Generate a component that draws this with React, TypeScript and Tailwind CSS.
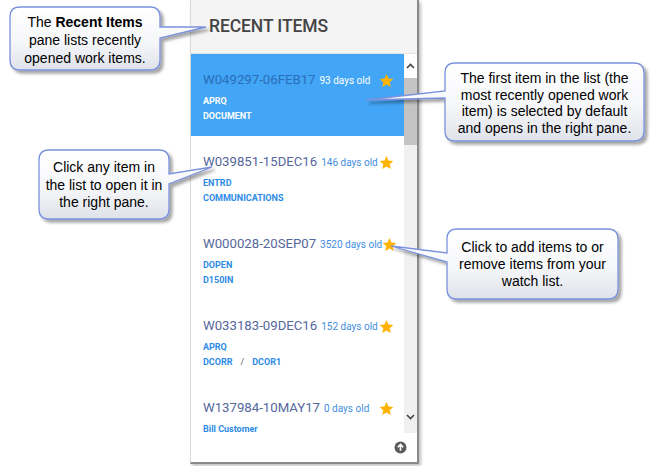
import React from "react";

type Item = {
  id: string;
  age: string;
  lines: React.ReactNode[];
  selected?: boolean;
};

const items: Item[] = [
  { id: "W049297-06FEB17", age: "93 days old", lines: ["APRQ", "DOCUMENT"], selected: true },
  { id: "W039851-15DEC16", age: "146 days old", lines: ["ENTRD", "COMMUNICATIONS"] },
  { id: "W000028-20SEP07", age: "3520 days old", lines: ["DOPEN", "D150IN"] },
  {
    id: "W033183-09DEC16",
    age: "152 days old",
    lines: [
      "APRQ",
      <span key="d">
        DCORR<span className="mx-[8px] text-[#5a5a5a] font-normal">/</span>DCOR1
      </span>,
    ],
  },
  { id: "W137984-10MAY17", age: "0 days old", lines: ["Bill Customer"] },
];

function Star() {
  return (
    <svg width="15" height="15" viewBox="0 0 24 24" className="shrink-0">
      <path
        d="M12 1.5l3.2 7.1 7.7.8-5.8 5.2 1.7 7.6L12 18.3l-6.8 3.9 1.7-7.6L1.1 9.4l7.7-.8z"
        fill="#ffb300"
      />
    </svg>
  );
}

function Row({ item, last }: { item: Item; last?: boolean }) {
  const sel = item.selected;
  return (
    <div
      className={`${last ? "" : "h-[82px]"} shrink-0 pt-[18px] pl-[12px] pr-[10px] ${sel ? "bg-[#42a5f5]" : "bg-white"}`}
    >
      <div className="flex items-center justify-between h-[16px]">
        <div className="flex items-baseline whitespace-nowrap">
          <span
            className={`text-[13.2px] leading-[16px] font-normal ${sel ? "text-[#2a6db9]" : "text-[#55679c]"}`}
          >
            {item.id}
          </span>
          <span
            className={`ml-[4px] text-[10px] leading-[16px] ${sel ? "text-white" : "text-[#3f8fdd]"}`}
          >
            {item.age}
          </span>
        </div>
        <Star />
      </div>
      <div className="mt-[7px] flex flex-col gap-[3px]">
        {item.lines.map((l, i) => (
          <div
            key={i}
            className={`text-[9px] leading-[12px] font-bold ${sel ? "text-white" : "text-[#2d8be6]"}`}
          >
            {l}
          </div>
        ))}
      </div>
    </div>
  );
}

function Callouts() {
  const stroke = "#7a92dc";
  const paths = [
    "M20 7 H150 Q160 7 160 17 V27 L206 27 L160 38 V60 Q160 70 150 70 H20 Q10 70 10 60 V17 Q10 7 20 7 Z",
    "M455 63 H634 Q644 63 644 73 V131 Q644 141 634 141 H455 Q445 141 445 131 V98 L366 100 L445 91 V73 Q445 63 455 63 Z",
    "M49 150 H159 Q169 150 169 160 V174 L212 167 L169 184 V209 Q169 219 159 219 H49 Q39 219 39 209 V160 Q39 150 49 150 Z",
    "M457 229 H608 Q618 229 618 239 V289 Q618 299 608 299 H457 Q447 299 447 289 V262 L391 246 L447 253 V239 Q447 229 457 229 Z",
  ];
  return (
    <svg
      className="absolute left-0 top-0 pointer-events-none"
      width="659"
      height="466"
      viewBox="0 0 659 466"
    >
      <defs>
        <linearGradient id="cg" x1="0" y1="0" x2="0" y2="1">
          <stop offset="0" stopColor="#ffffff" />
          <stop offset="0.55" stopColor="#f6f7fa" />
          <stop offset="1" stopColor="#dfe2ea" />
        </linearGradient>
        <filter id="sh" x="-10%" y="-10%" width="130%" height="140%">
          <feDropShadow dx="3" dy="3" stdDeviation="1.6" floodColor="#000" floodOpacity="0.35" />
        </filter>
      </defs>
      {paths.map((d, i) => (
        <path key={i} d={d} fill="url(#cg)" stroke={stroke} strokeWidth="1.3" filter="url(#sh)" />
      ))}
    </svg>
  );
}

const calloutText =
  "absolute text-center text-[14px] text-black [font-family:'Liberation_Sans',Arial,sans-serif]";

export default function App() {
  return (
    <div className="relative w-[659px] h-[466px] bg-white overflow-hidden [font-family:Roboto,'Liberation_Sans',sans-serif]">
      <div className="ml-[190px] w-[229px] h-[464px] flex flex-col border-l border-[#d8d8d8] border-r-2 border-b-2 border-r-[#8a8a8a] border-b-[#8a8a8a] shadow-[2px_2px_3px_rgba(0,0,0,0.25)] bg-white">
        <div className="h-[54px] shrink-0 bg-[#f4f4f4] border-b border-[#e4e4e4] flex items-center pl-[18px]">
          <span className="text-[17.5px] font-medium text-[#444444] tracking-[-0.1px]">RECENT ITEMS</span>
        </div>
        <div className="h-[379px] shrink-0 flex">
          <div className="w-[213px] flex flex-col">
            {items.map((it, i) => (
              <Row key={it.id} item={it} last={i === items.length - 1} />
            ))}
          </div>
          <div className="w-[13px] bg-[#f0f0f0] flex flex-col items-center">
            <div className="h-[24px] w-full flex items-center justify-center bg-white">
              <svg width="9" height="6" viewBox="0 0 9 6">
                <path d="M1 5 L4.5 1.5 L8 5" fill="none" stroke="#444" strokeWidth="1.6" />
              </svg>
            </div>
            <div className="h-[67px] w-full bg-[#c4c4c4]" />
            <div className="flex-1" />
            <div className="h-[32px] w-full flex items-center justify-center">
              <svg width="9" height="6" viewBox="0 0 9 6">
                <path d="M1 1 L4.5 4.5 L8 1" fill="none" stroke="#444" strokeWidth="1.6" />
              </svg>
            </div>
          </div>
        </div>
        <div className="flex-1 flex items-center justify-end pr-[10px]">
          <svg width="13" height="13" viewBox="0 0 24 24">
            <circle cx="12" cy="12" r="11" fill="#5a5a5a" />
            <path d="M12 18 V7 M7 11.5 L12 6.5 L17 11.5" fill="none" stroke="#fff" strokeWidth="3" />
          </svg>
        </div>
      </div>

      <Callouts />

      <div className={`${calloutText} left-[10px] top-[13px] w-[150px] leading-[18px]`}>
        The <b>Recent Items</b>
        <br />
        pane lists recently
        <br />
        opened work items.
      </div>
      <div className={`${calloutText} left-[445px] top-[70px] w-[199px] leading-[16.5px]`}>
        The first item in the list (the
        <br />
        most recently opened work
        <br />
        item) is selected by default
        <br />
        and opens in the right pane.
      </div>
      <div className={`${calloutText} left-[39px] top-[159px] w-[130px] leading-[17.5px]`}>
        Click any item in
        <br />
        the list to open it in
        <br />
        the right pane.
      </div>
      <div className={`${calloutText} left-[447px] top-[239px] w-[171px] leading-[17px]`}>
        Click to add items to or
        <br />
        remove items from your
        <br />
        watch list.
      </div>
    </div>
  );
}
